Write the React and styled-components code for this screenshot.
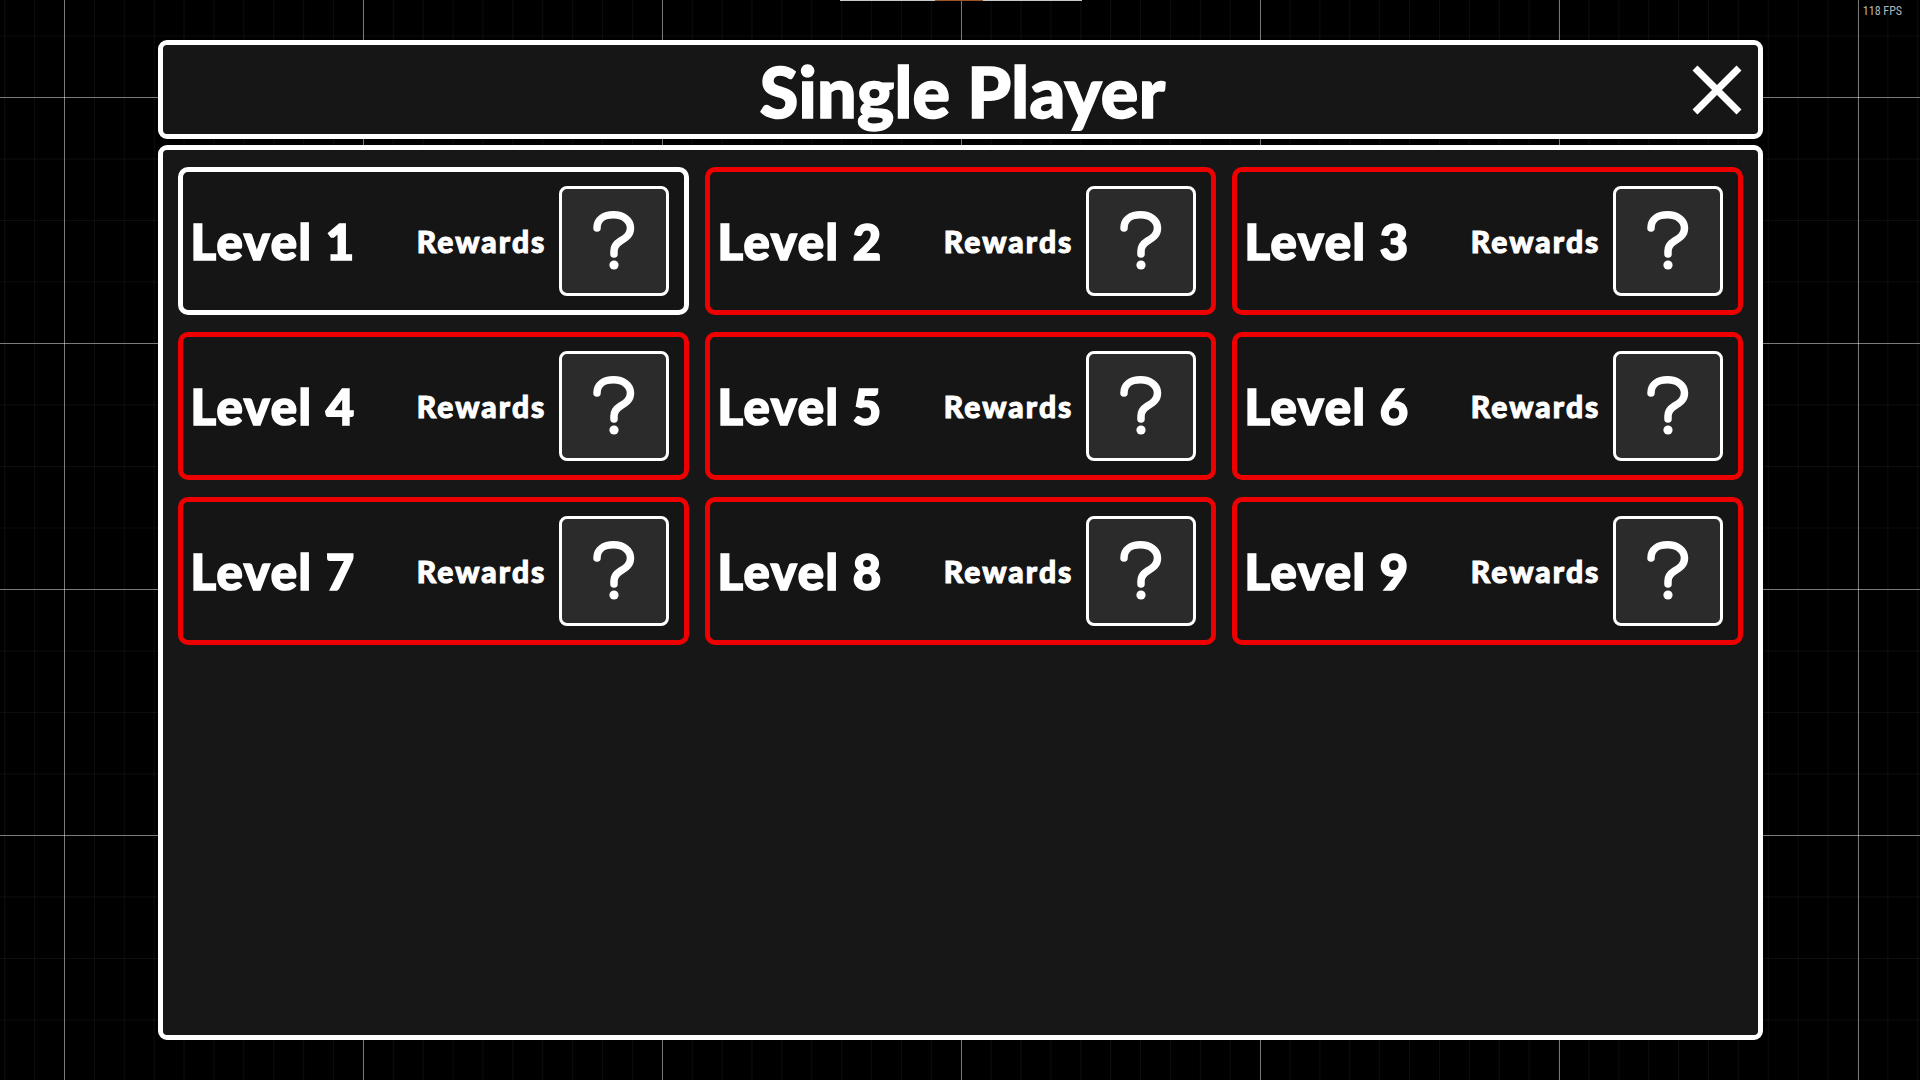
import React from 'react'
import styled, { createGlobalStyle } from 'styled-components'

const levels = [1, 2, 3, 4, 5, 6, 7, 8, 9]

const App = () => {
  return (
    <Page>
      <GlobalStyle />
      <LoadBar>
        <LoadPart $color='#c9c9c9' $width={95} />
        <LoadPart $color='#a0532a' $width={48} />
        <LoadPart $color='#c9c9c9' $width={99} />
      </LoadBar>
      <Fps>118 FPS</Fps>
      <Window>
        <Header>
          <span />
          <Title>Single Player</Title>
          <CloseButton aria-label='close'>
            <svg width='52' height='50' viewBox='0 0 52 50'>
              <path d='M4 3 L48 47 M48 3 L4 47' stroke='#fff' strokeWidth='7' fill='none' />
            </svg>
          </CloseButton>
        </Header>
        <Panel>
          <LevelGrid>
            {levels.map((n) => (
              <LevelCard key={n} $unlocked={n === 1}>
                <LevelName>Level {n}</LevelName>
                <RewardGroup>
                  <RewardLabel>Rewards</RewardLabel>
                  <RewardBox>
                    <svg width='44' height='60' viewBox='0 0 44 60'>
                      <path
                        d='M5 17 C5 8.5 12 3.8 21.5 3.8 C31 3.8 38.5 9 38.5 17 C38.5 24 33.5 27 28.5 30 C24.5 32.5 22 35 22 40 V43'
                        stroke='#fff'
                        strokeWidth='7.5'
                        strokeLinecap='round'
                        fill='none'
                      />
                      <circle cx='22' cy='54' r='4.6' fill='#fff' />
                    </svg>
                  </RewardBox>
                </RewardGroup>
              </LevelCard>
            ))}
          </LevelGrid>
        </Panel>
      </Window>
    </Page>
  )
}

const GlobalStyle = createGlobalStyle`
  html, body {
    margin: 0;
    padding: 0;
    background: #000;
  }
  body {
    font-family: 'Lato', 'Noto Sans', sans-serif;
  }
`

const Page = styled.div`
  position: relative;
  width: 1920px;
  height: 1080px;
  overflow: hidden;
  background-color: #000;
  background-image:
    linear-gradient(to right, rgba(255, 255, 255, 0.45) 1px, transparent 1px),
    linear-gradient(to bottom, rgba(255, 255, 255, 0.45) 1px, transparent 1px),
    linear-gradient(to right, rgba(255, 255, 255, 0.05) 1px, transparent 1px),
    linear-gradient(to bottom, rgba(255, 255, 255, 0.05) 1px, transparent 1px);
  background-size: 299px 100%, 100% 246px, 29.9px 100%, 100% 61.5px;
  background-position: 64px 0, 0 97px, 64px 0, 0 97px;
  padding-top: 40px;
  box-sizing: border-box;
`

const LoadBar = styled.div`
  position: absolute;
  top: 0;
  left: 840px;
  display: flex;
  height: 1px;
`

const LoadPart = styled.div`
  width: ${(p) => p.$width}px;
  height: 100%;
  background: ${(p) => p.$color};
`

const Fps = styled.div`
  position: absolute;
  top: 4px;
  right: 18px;
  font-family: 'Liberation Sans Narrow', 'Roboto Condensed', 'Roboto', sans-serif;
  font-size: 12px;
  color: #b5b5b5;
`

const Window = styled.div`
  width: 1605px;
  margin: 0 auto;
  display: flex;
  flex-direction: column;
  gap: 6px;
`

const Header = styled.div`
  box-sizing: border-box;
  height: 99px;
  border: 5px solid #fff;
  border-radius: 9px;
  background: #161616;
  display: grid;
  grid-template-columns: 1fr auto 1fr;
  align-items: center;
  padding: 0 15px 0 20px;
`

const Title = styled.h1`
  margin: 0;
  font-family: 'Lato', 'Noto Sans', sans-serif;
  font-weight: 900;
  font-size: 70px;
  letter-spacing: 0.3px;
  line-height: 1;
  color: #fff;
  -webkit-text-stroke: 1.5px #fff;
  padding-top: 2px;
`

const CloseButton = styled.button`
  justify-self: end;
  background: none;
  border: none;
  padding: 0;
  display: flex;
  cursor: pointer;
`

const Panel = styled.div`
  box-sizing: border-box;
  height: 895px;
  border: 5px solid #fff;
  border-radius: 9px;
  background: #171717;
  padding: 17px 15px;
`

const LevelGrid = styled.div`
  display: grid;
  grid-template-columns: repeat(3, 1fr);
  grid-auto-rows: 148px;
  column-gap: 16px;
  row-gap: 17px;
`

const LevelCard = styled.div`
  box-sizing: border-box;
  border: 5px solid ${(p) => (p.$unlocked ? '#ffffff' : '#ee0000')};
  border-radius: 10px;
  background: #151515;
  display: flex;
  align-items: center;
  justify-content: space-between;
  padding: 0 15px 0 8px;
`

const LevelName = styled.span`
  font-family: 'Lato', 'Noto Sans', sans-serif;
  font-weight: 900;
  font-size: 49px;
  letter-spacing: 1.6px;
  color: #fff;
  -webkit-text-stroke: 1.6px #fff;
  line-height: 1;
`

const RewardLabel = styled.span`
  font-family: 'Lato', 'Noto Sans', sans-serif;
  font-weight: 900;
  font-size: 30px;
  letter-spacing: 2.1px;
  color: #fff;
  -webkit-text-stroke: 1px #fff;
  line-height: 1;
`

const RewardGroup = styled.div`
  display: flex;
  align-items: center;
  gap: 12px;
`

const RewardBox = styled.div`
  box-sizing: border-box;
  width: 110px;
  height: 110px;
  border: 3px solid #fff;
  border-radius: 8px;
  background: #2b2b2b;
  display: flex;
  align-items: center;
  justify-content: center;
`

export default App
